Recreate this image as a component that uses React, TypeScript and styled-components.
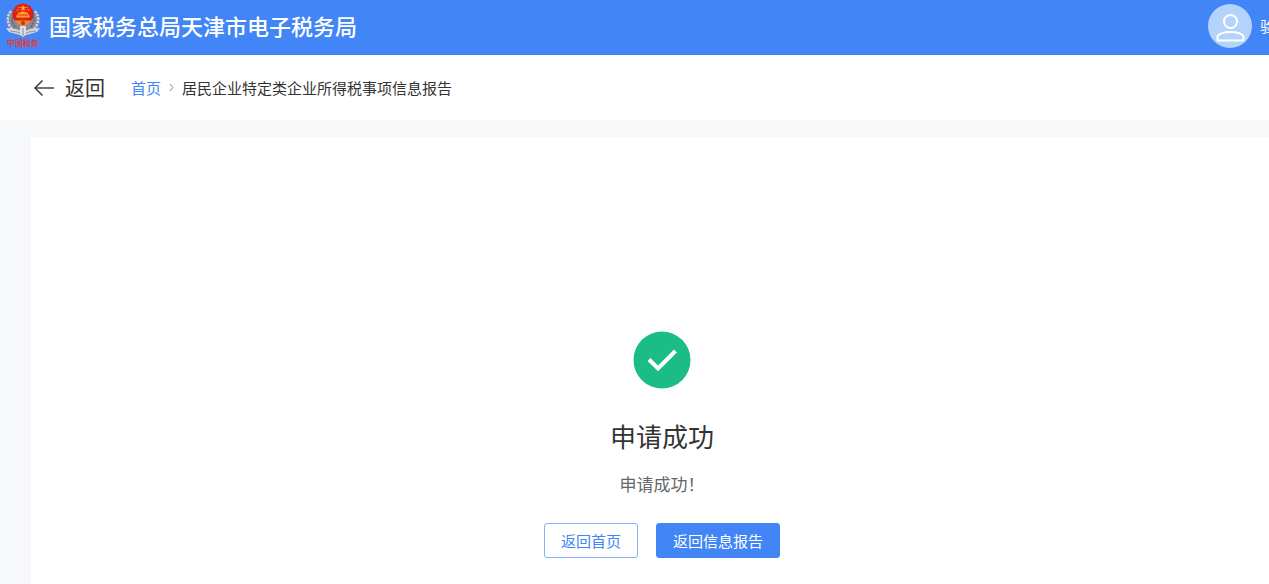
import React from 'react';
import styled, { createGlobalStyle } from 'styled-components';

const GlobalStyle = createGlobalStyle`
  *, *::before, *::after { box-sizing: border-box; }
  body {
    margin: 0;
    background: #f7f8fa;
    color: #333;
    font-family: "Noto Sans CJK SC", "Noto Sans", sans-serif;
    font-size: 15px;
    line-height: 24px;
  }
`;

const Page = styled.div`
  display: flex;
  flex-direction: column;
  min-height: 100vh;
`;

const Header = styled.header`
  display: flex;
  align-items: flex-start;
  justify-content: space-between;
  height: 55px;
  padding-left: 4px;
  background: #4285f6;
  color: #fff;
  overflow: hidden;
`;

const Brand = styled.div`
  display: flex;
  align-items: center;
  gap: 7px;
  height: 52px;
  padding-bottom: 2px;
`;

const SiteName = styled.h1`
  margin: 0;
  font-size: 22px;
  line-height: 32px;
  font-weight: 500;
  white-space: nowrap;
`;

const User = styled.div`
  display: flex;
  flex: none;
  align-items: center;
  gap: 8px;
  width: 61px;
  height: 52px;
  overflow: hidden;
  white-space: nowrap;
`;

const UserName = styled.span`
  flex: none;
`;

const Nav = styled.nav`
  display: flex;
  align-items: center;
  height: 65px;
  padding: 0 32px;
  background: #fff;
`;

const BackButton = styled.button`
  display: flex;
  align-items: center;
  gap: 9px;
  margin-right: 26px;
  padding: 0;
  border: 0;
  background: none;
  color: #333;
  font: inherit;
  font-size: 20px;
  line-height: 32px;
  cursor: pointer;
`;

const Crumbs = styled.ol`
  display: flex;
  align-items: center;
  gap: 6px;
  margin: 0;
  padding: 0;
  list-style: none;
`;

const Crumb = styled.li`
  display: flex;
  align-items: center;
  gap: 6px;
`;

const CrumbLink = styled.a`
  color: #4285f6;
  text-decoration: none;
`;

const Card = styled.main`
  display: flex;
  flex: 1;
  flex-direction: column;
  align-items: center;
  margin: 17px 0 0 31px;
  padding: 194px 0 24px 24px;
  background: #fff;
`;

const ResultTitle = styled.h2`
  margin: 27px 0 0;
  font-size: 26px;
  line-height: 40px;
  font-weight: 400;
`;

const ResultText = styled.p`
  margin: 16px 0 0;
  color: #666;
  font-size: 17px;
  line-height: 24px;
`;

const Actions = styled.div`
  display: flex;
  gap: 18px;
  margin-top: 27px;
`;

const ActionButton = styled.button<{ $primary?: boolean }>`
  height: 35px;
  padding: 0 16px;
  border: 1px solid ${(p) => (p.$primary ? '#4285f6' : '#84b0f9')};
  border-radius: 3px;
  background: ${(p) => (p.$primary ? '#4285f6' : '#fff')};
  color: ${(p) => (p.$primary ? '#fff' : '#4285f6')};
  font: inherit;
  cursor: pointer;
`;

const Emblem = () => (
  <svg width="38" height="48" viewBox="0 0 38 48" role="img" aria-label="中国税务">
    <defs>
      <radialGradient id="red" cx="0.5" cy="0.4" r="0.6">
        <stop offset="0" stopColor="#f7321a" />
        <stop offset="1" stopColor="#d81410" />
      </radialGradient>
    </defs>
    <path d="M7 11C3 16 3 22 7 27c3 3 7 5 12 5s9-2 12-5c4-5 4-11 0-16l-5 12H12z" fill="#8b8a94" />
    <path
      d="M7 10C2 16 3 23 8 28M31 10c5 6 4 13-1 18"
      stroke="#d9d4cf"
      strokeWidth="2.500"
      strokeDasharray="2.500 1"
      fill="none"
    />
    <path d="M10 13C7 18 8 23 12 27M28 13c3 5 2 10-2 14" stroke="#5f5e6c" strokeWidth="1.500" strokeDasharray="2 1" fill="none" />
    <path d="M2 27l10 1 7 3 7-3 10-1-3 4-7 2-4 1-3 2-3-2-4-1-7-2z" fill="#d3d6dd" />
    <path d="M6 30l7 1 6 2 6-2 7-1" stroke="#8f929c" fill="none" />
    <path d="M16 25h6v7l-3 4-3-4z" fill="#dedfe4" />
    <path d="M19 27v8" stroke="#858893" />
    <circle cx="19" cy="13" r="10.500" fill="url(#red)" />
    <path d="M19 4l1 2h2l-2 1.500 1 2-2-1-2 1 1-2L16 6h2z" fill="#ffb42c" />
    <g fill="#ffa028">
      <circle cx="13.500" cy="9" r="0.8" />
      <circle cx="15" cy="6.500" r="0.7" />
      <circle cx="23" cy="6.500" r="0.7" />
      <circle cx="24.500" cy="9" r="0.8" />
      <path d="M14 12l5-1.500 5 1.500v1.500h1l1 3H12l1-3h1z" />
      <path d="M10.500 19.500h17l-3 3.500-5.500 2-5.500-2z" fill="#f08a28" />
    </g>
    <path d="M14 14h10" stroke="#d23a12" />
    <circle cx="19" cy="22" r="2" fill="#d42f14" />
    <text x="3" y="45" fill="#e23c3c" fontSize="8" fontWeight="700">中国税务</text>
  </svg>
);

const AvatarIcon = styled.svg`
  flex: none;
`;

const Avatar = () => (
  <AvatarIcon width="44" height="44" viewBox="0 0 44 44" role="img" aria-label="用户">
    <circle cx="22" cy="22" r="22" fill="#b4d3fb" />
    <g fill="none" stroke="#fff" strokeWidth="2">
      <circle cx="22.500" cy="17.500" r="6.500" />
      <path d="M9.500 36.500v-3.500c0-3 6-5 13-5s13 2 13 5v3.500z" strokeLinejoin="round" />
    </g>
  </AvatarIcon>
);

const BackArrow = () => (
  <svg width="24" height="20" viewBox="0 0 24 20" fill="none" stroke="#444" strokeWidth="1.600" aria-hidden="true">
    <path d="M22 10H3M10.500 2.500L3 10l7.500 7.500" />
  </svg>
);

const Chevron = () => (
  <svg width="9" height="10" viewBox="0 0 9 10" fill="none" stroke="#888" aria-hidden="true">
    <path d="M3 1l3 3.500L3 8" />
  </svg>
);

const SuccessIcon = () => (
  <svg width="58" height="58" viewBox="0 0 58 58" fill="none" role="img" aria-label="成功">
    <circle cx="29" cy="29" r="28.500" fill="#1bbc86" />
    <path d="M16 28.500l9 9L42.500 20" stroke="#fff" strokeWidth="4" />
  </svg>
);

export default function App() {
  return (
    <>
      <GlobalStyle />
      <Page>
        <Header>
          <Brand>
            <Emblem />
            <SiteName>国家税务总局天津市电子税务局</SiteName>
          </Brand>
          <User>
            <Avatar />
            <UserName>验</UserName>
          </User>
        </Header>
        <Nav aria-label="面包屑">
          <BackButton type="button">
            <BackArrow />
            返回
          </BackButton>
          <Crumbs>
            <Crumb>
              <CrumbLink href="#">首页</CrumbLink>
              <Chevron />
            </Crumb>
            <Crumb aria-current="page">居民企业特定类企业所得税事项信息报告</Crumb>
          </Crumbs>
        </Nav>
        <Card>
          <SuccessIcon />
          <ResultTitle>申请成功</ResultTitle>
          <ResultText>申请成功！</ResultText>
          <Actions>
            <ActionButton type="button">返回首页</ActionButton>
            <ActionButton type="button" $primary>返回信息报告</ActionButton>
          </Actions>
        </Card>
      </Page>
    </>
  );
}
